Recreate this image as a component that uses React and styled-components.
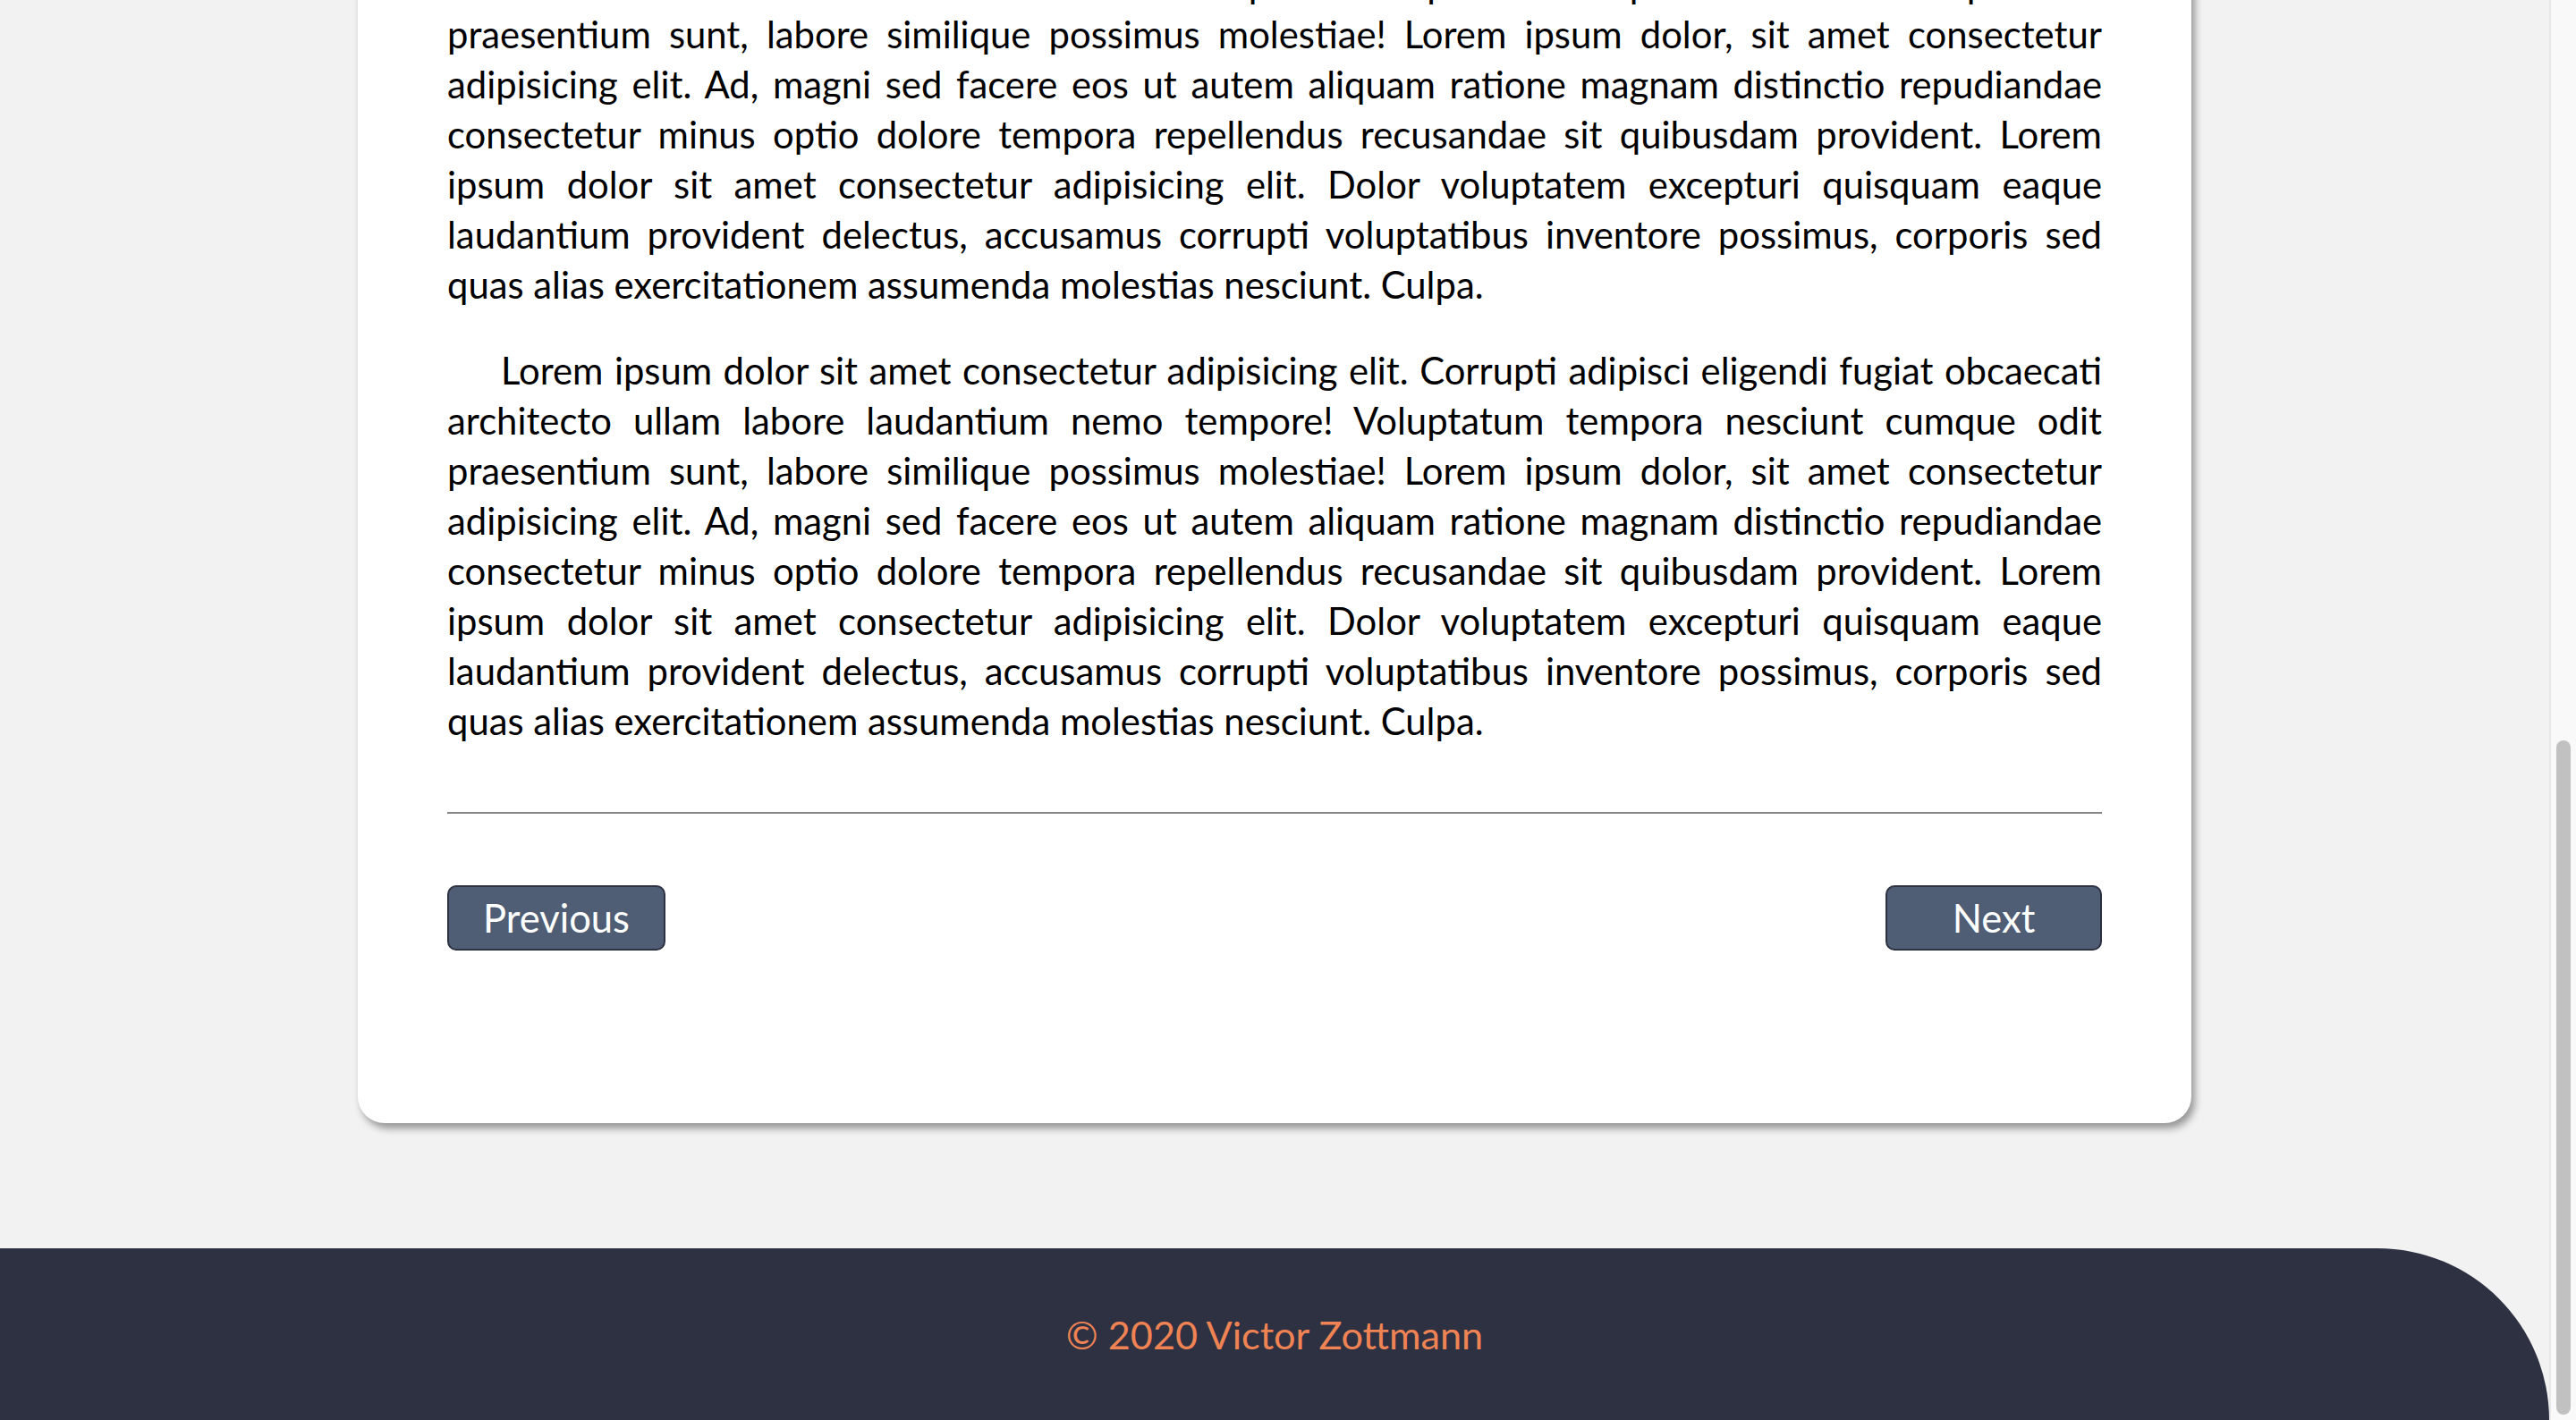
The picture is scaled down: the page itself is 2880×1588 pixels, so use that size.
import React, { useLayoutEffect, useRef, useState } from 'react';
import styled, { createGlobalStyle } from 'styled-components';

const GlobalStyle = createGlobalStyle`
  html, body {
    margin: 0;
    padding: 0;
    height: 100%;
  }
  body {
    font-family: Lato, "Open Sans", sans-serif;
    color: #000;
    background: #f2f2f2;
  }
  * { box-sizing: border-box; }
`;

const text =
  'Lorem ipsum dolor sit amet consectetur adipisicing elit. Corrupti adipisci eligendi fugiat obcaecati architecto ullam labore laudantium nemo tempore! Voluptatum tempora nesciunt cumque odit praesentium sunt, labore similique possimus molestiae! Lorem ipsum dolor, sit amet consectetur adipisicing elit. Ad, magni sed facere eos ut autem aliquam ratione magnam distinctio repudiandae consectetur minus optio dolore tempora repellendus recusandae sit quibusdam provident. Lorem ipsum dolor sit amet consectetur adipisicing elit. Dolor voluptatem excepturi quisquam eaque laudantium provident delectus, accusamus corrupti voluptatibus inventore possimus, corporis sed quas alias exercitationem assumenda molestias nesciunt. Culpa.';

const Page = styled.div`
  display: flex;
  height: 100vh;
  background: #f2f2f2;
`;

const Viewport = styled.div`
  flex: 1;
  min-width: 0;
  overflow: hidden;
`;

const Rail = styled.div`
  position: relative;
  flex: 0 0 30px;
  background: #f9f9f9;
  border-left: 2px solid #e8e8e8;
`;

const Thumb = styled.div`
  position: absolute;
  left: 6px;
  right: 6px;
  border-radius: 8px;
  background: #c1c1c1;
`;

const Nav = styled.header`
  height: 140px;
  display: flex;
  align-items: center;
  justify-content: space-between;
  padding: 0 100px;
  background: #2d3142;
  color: #ef8354;
  font-size: 42px;
`;

const NavLinks = styled.nav`
  display: flex;
  gap: 60px;
  font-size: 36px;
  color: #fff;
`;

const Main = styled.main`
  padding: 140px 0;
`;

const Card = styled.article`
  width: 100%;
  max-width: 2050px;
  margin: 0 auto;
  padding: 100px 100px 193px;
  background: #fff;
  border-radius: 30px;
  box-shadow: 4px 6px 9px rgba(0, 0, 0, 0.38);
`;

const Title = styled.h1`
  margin: 0 0 40px;
  font-size: 72px;
  line-height: 100px;
  font-weight: 700;
  color: #2d3142;
`;

const Meta = styled.p`
  margin: 0 0 49px;
  font-size: 36px;
  line-height: 56px;
  color: #4f5d75;
`;

const Paragraph = styled.p`
  margin: 0 0 40px;
  font-size: 41.8px;
  line-height: 56px;
  text-align: justify;
  text-indent: 60px;
`;

const Divider = styled.hr`
  margin: 74px 0 80px;
  height: 2px;
  border: 0;
  background: #858585;
`;

const Pager = styled.div`
  display: flex;
  justify-content: space-between;
  align-items: center;
`;

const PagerButton = styled.button`
  width: ${(p) => (p.$wide ? '244px' : '242px')};
  height: 73px;
  padding: 0;
  border: 2px solid #2d3142;
  border-radius: 10px;
  background: #4f5d75;
  color: #fff;
  font-family: Lato, "Open Sans", sans-serif;
  font-size: 43.5px;
  line-height: 1;
  cursor: pointer;
`;

const Footer = styled.footer`
  height: 192px;
  display: flex;
  align-items: center;
  justify-content: center;
  background: #2d3142;
  border-top-right-radius: 192px;
  color: #ef8354;
  font-size: 43.2px;
`;

export default function App() {
  const viewportRef = useRef(null);
  const [thumb, setThumb] = useState({ top: 0, height: 0 });

  useLayoutEffect(() => {
    const el = viewportRef.current;
    el.scrollTop = el.scrollHeight;
    const track = el.clientHeight;
    const total = el.scrollHeight;
    setThumb({
      top: (el.scrollTop / total) * track + 6,
      height: (el.clientHeight / total) * track - 12,
    });
  }, []);

  return (
    <>
      <GlobalStyle />
      <Page>
        <Viewport ref={viewportRef}>
          <Nav>
            <span>Victor Zottmann</span>
            <NavLinks>
              <span>Home</span>
              <span>Blog</span>
              <span>About</span>
            </NavLinks>
          </Nav>
          <Main>
            <Card>
              <Title>Lorem ipsum dolor sit amet</Title>
              <Meta>Posted on March 12, 2020</Meta>
              {[0, 1, 2, 3].map((i) => (
                <Paragraph key={i}>{text}</Paragraph>
              ))}
              <Divider />
              <Pager>
                <PagerButton $wide>Previous</PagerButton>
                <PagerButton>Next</PagerButton>
              </Pager>
            </Card>
          </Main>
          <Footer>© 2020 Victor Zottmann</Footer>
        </Viewport>
        <Rail>
          <Thumb style={{ top: thumb.top, height: thumb.height }} />
        </Rail>
      </Page>
    </>
  );
}
